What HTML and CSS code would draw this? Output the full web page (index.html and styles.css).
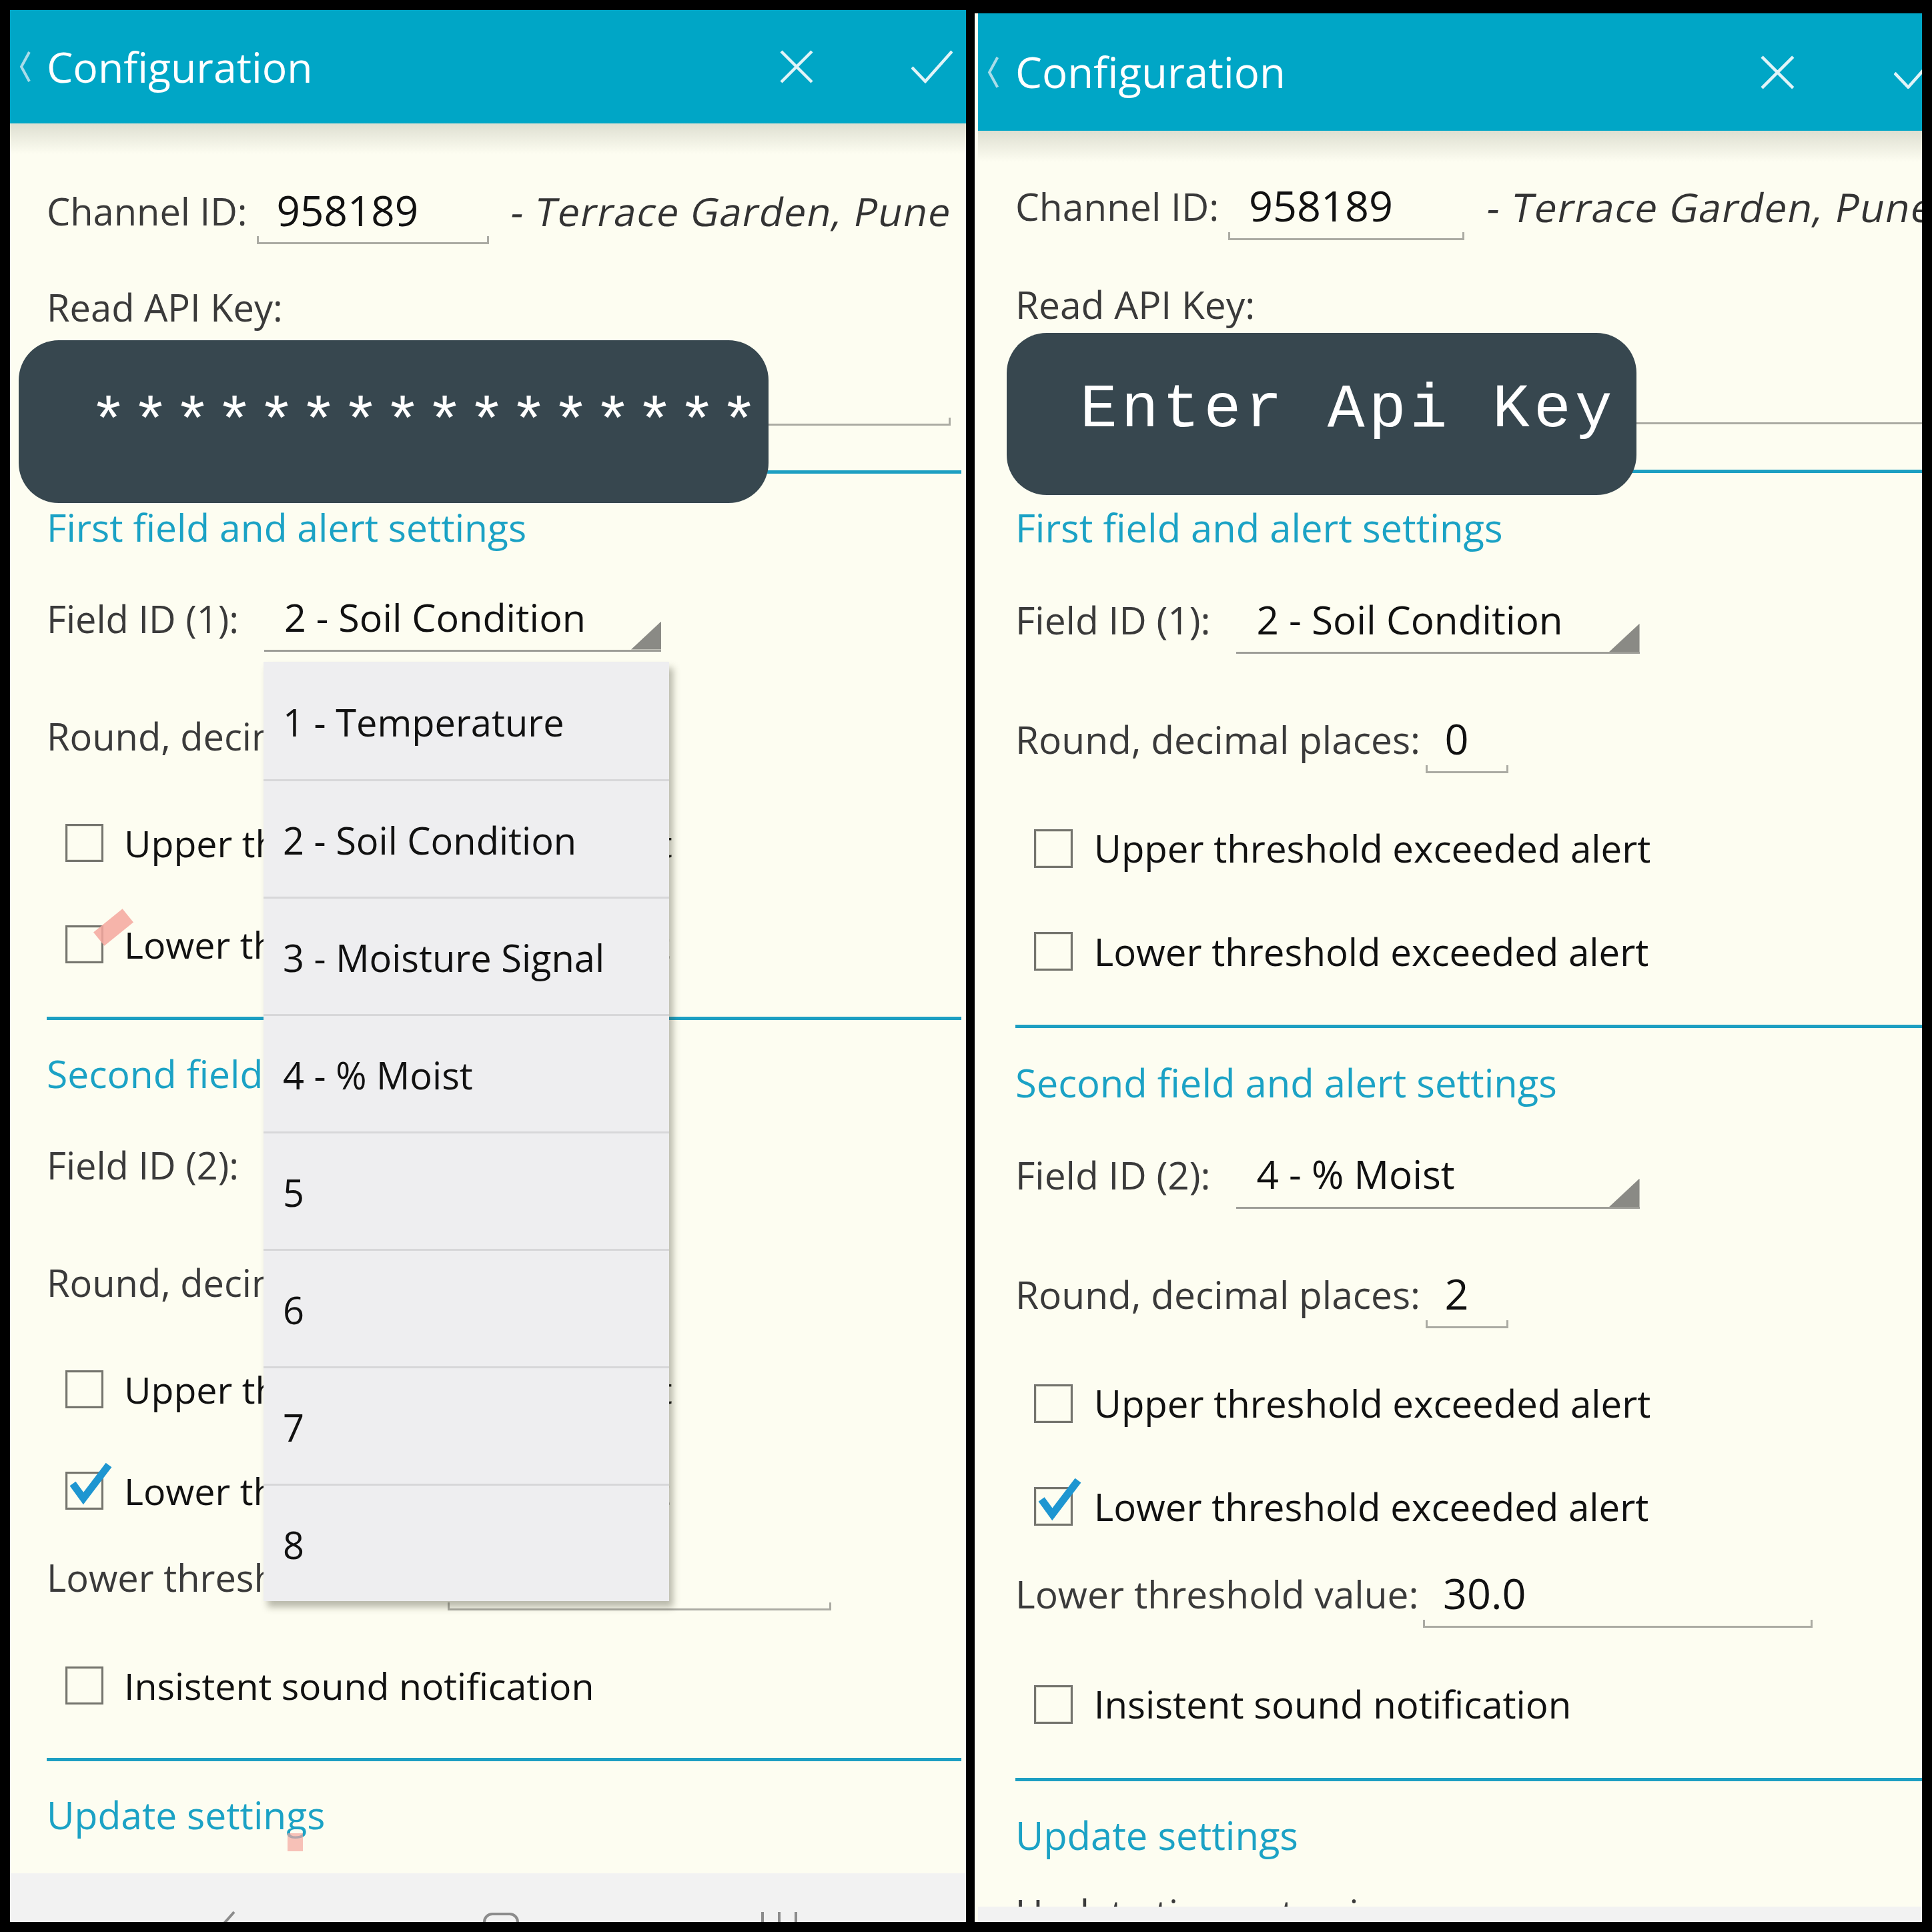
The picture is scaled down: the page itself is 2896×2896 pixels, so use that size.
FILE: index.html
```html
<!DOCTYPE html>
<html lang="en">
<head>
<meta charset="utf-8">
<title>Configuration</title>
<link rel="stylesheet" href="styles.css">
</head>
<body>
<main class="collage">

  <section class="phone phone--left">
    <div class="screen">
      <header class="appbar">
        <svg class="appbar__back" viewBox="0 0 20 50"><polyline points="16,3 4,25 16,47" fill="none" stroke="#a9dde9" stroke-width="4"/></svg>
        <h1 class="appbar__title">Configuration</h1>
        <svg class="appbar__close" viewBox="0 0 52 52"><path d="M3 3 L49 49 M49 3 L3 49" stroke="#e2f4f8" stroke-width="4.5" fill="none"/></svg>
        <svg class="appbar__done" viewBox="0 0 62 50"><polyline points="1,26 21,47 61,2" fill="none" stroke="#e2f4f8" stroke-width="4.5"/></svg>
      </header>
      <div class="content">
        <div class="row row--channel">
          <span class="label">Channel ID:</span>
          <span class="edit edit--channel"><span class="value">958189</span></span>
          <span class="channel-name">- Terrace Garden, Pune</span>
        </div>
        <div class="row row--key-label"><span class="label">Read API Key:</span></div>
        <div class="row row--key"><span class="edit edit--key"></span></div>
        <hr class="divider">
        <h2 class="section-title">First field and alert settings</h2>
        <div class="row row--field">
          <span class="label">Field ID (1):</span>
          <span class="spinner">2 - Soil Condition</span>
        </div>
        <div class="row row--round">
          <span class="label">Round, decimal places:</span>
          <span class="edit edit--round"><span class="value">0</span></span>
        </div>
        <div class="row row--check">
          <span class="checkbox"></span>
          <span class="check-label">Upper threshold exceeded alert</span>
        </div>
        <div class="row row--check">
          <span class="checkbox"></span>
          <span class="check-label">Lower threshold exceeded alert</span>
        </div>
        <hr class="divider">
        <h2 class="section-title">Second field and alert settings</h2>
        <div class="row row--field">
          <span class="label">Field ID (2):</span>
          <span class="spinner">4 - % Moist</span>
        </div>
        <div class="row row--round">
          <span class="label">Round, decimal places:</span>
          <span class="edit edit--round"><span class="value">2</span></span>
        </div>
        <div class="row row--check">
          <span class="checkbox"></span>
          <span class="check-label">Upper threshold exceeded alert</span>
        </div>
        <div class="row row--check">
          <span class="checkbox checkbox--on"><svg class="checkbox__mark" viewBox="0 0 70 66"><polyline points="6,30 22,52 60,2" fill="none" stroke="#1e96d1" stroke-width="11"/></svg></span>
          <span class="check-label">Lower threshold exceeded alert</span>
        </div>
        <div class="row row--threshold">
          <span class="label">Lower threshold value:</span>
          <span class="edit edit--threshold"><span class="value">30.0</span></span>
        </div>
        <div class="row row--check row--insistent">
          <span class="checkbox"></span>
          <span class="check-label">Insistent sound notification</span>
        </div>
        <hr class="divider">
        <h2 class="section-title">Update settings</h2>
        <div class="row row--timeout"><span class="label">Update timeout, min</span></div>
      </div>
      <nav class="navbar">
        <svg viewBox="0 0 1433 73" width="1433" height="73">
          <polyline points="336,58 320,76" fill="none" stroke="#8c8c8c" stroke-width="4"/>
          <rect x="711" y="61" width="50" height="36" rx="12" fill="none" stroke="#8c8c8c" stroke-width="4"/>
          <path d="M1128 58 V76 M1153 58 V76 M1178 58 V76" stroke="#8c8c8c" stroke-width="4"/>
        </svg>
      </nav>
    </div>

    <div class="redact redact--left">****************</div>

    <ul class="dropdown">
      <li class="dropdown__item">1 - Temperature</li>
      <li class="dropdown__item">2 - Soil Condition</li>
      <li class="dropdown__item">3 - Moisture Signal</li>
      <li class="dropdown__item">4 - % Moist</li>
      <li class="dropdown__item">5</li>
      <li class="dropdown__item">6</li>
      <li class="dropdown__item">7</li>
      <li class="dropdown__item">8</li>
    </ul>

    <span class="touch touch--check"></span>
    <span class="touch touch--update"></span>
  </section>

  <section class="phone phone--right">
    <div class="screen">
      <header class="appbar">
        <svg class="appbar__back" viewBox="0 0 20 50"><polyline points="16,3 4,25 16,47" fill="none" stroke="#a9dde9" stroke-width="4"/></svg>
        <h1 class="appbar__title">Configuration</h1>
        <svg class="appbar__close" viewBox="0 0 52 52"><path d="M3 3 L49 49 M49 3 L3 49" stroke="#e2f4f8" stroke-width="4.5" fill="none"/></svg>
        <svg class="appbar__done" viewBox="0 0 62 50"><polyline points="1,26 21,47 61,2" fill="none" stroke="#e2f4f8" stroke-width="4.5"/></svg>
      </header>
      <div class="content">
        <div class="row row--channel">
          <span class="label">Channel ID:</span>
          <span class="edit edit--channel"><span class="value">958189</span></span>
          <span class="channel-name">- Terrace Garden, Pune</span>
        </div>
        <div class="row row--key-label"><span class="label">Read API Key:</span></div>
        <div class="row row--key"><span class="edit edit--key"></span></div>
        <hr class="divider">
        <h2 class="section-title">First field and alert settings</h2>
        <div class="row row--field">
          <span class="label">Field ID (1):</span>
          <span class="spinner">2 - Soil Condition</span>
        </div>
        <div class="row row--round">
          <span class="label">Round, decimal places:</span>
          <span class="edit edit--round"><span class="value">0</span></span>
        </div>
        <div class="row row--check">
          <span class="checkbox"></span>
          <span class="check-label">Upper threshold exceeded alert</span>
        </div>
        <div class="row row--check">
          <span class="checkbox"></span>
          <span class="check-label">Lower threshold exceeded alert</span>
        </div>
        <hr class="divider">
        <h2 class="section-title">Second field and alert settings</h2>
        <div class="row row--field">
          <span class="label">Field ID (2):</span>
          <span class="spinner">4 - % Moist</span>
        </div>
        <div class="row row--round">
          <span class="label">Round, decimal places:</span>
          <span class="edit edit--round"><span class="value">2</span></span>
        </div>
        <div class="row row--check">
          <span class="checkbox"></span>
          <span class="check-label">Upper threshold exceeded alert</span>
        </div>
        <div class="row row--check">
          <span class="checkbox checkbox--on"><svg class="checkbox__mark" viewBox="0 0 70 66"><polyline points="6,30 22,52 60,2" fill="none" stroke="#1e96d1" stroke-width="11"/></svg></span>
          <span class="check-label">Lower threshold exceeded alert</span>
        </div>
        <div class="row row--threshold">
          <span class="label">Lower threshold value:</span>
          <span class="edit edit--threshold"><span class="value">30.0</span></span>
        </div>
        <div class="row row--check row--insistent">
          <span class="checkbox"></span>
          <span class="check-label">Insistent sound notification</span>
        </div>
        <hr class="divider">
        <h2 class="section-title">Update settings</h2>
        <div class="row row--timeout"><span class="label">Update timeout, min</span></div>
      </div>
      <nav class="navbar"></nav>
    </div>

    <div class="redact redact--right">Enter Api Key</div>
  </section>

</main>
</body>
</html>
```

FILE: styles.css
```css
* { box-sizing: border-box; margin: 0; padding: 0; }

html, body {
  width: 2896px;
  height: 2896px;
  background: #000;
  overflow: hidden;
}

body {
  font-family: "Open Sans", "Noto Sans", sans-serif;
}

.collage {
  display: flex;
  align-items: flex-start;
  gap: 13px;
  padding-left: 15px;
}

.phone {
  position: relative;
  overflow: hidden;
  background: #fdfdf1;
  flex: none;
}

.phone--left { margin-top: 15px; width: 1433px; height: 2866px; }
.phone--right { margin-top: 20px; width: 1420px; height: 2861px; }

.screen {
  width: 1433px;
  height: 2866px;
  display: flex;
  flex-direction: column;
  background: #fdfdf1;
  flex: none;
}

.phone--right .screen { zoom: 1.016; margin-left: 5px; }

/* ---------- app bar ---------- */
.appbar {
  flex: none;
  height: 170px;
  background: #00a6c6;
  display: flex;
  align-items: center;
  padding-right: 20px;
}
.phone--right .appbar { height: 173.2px; }

.appbar__back { width: 20px; height: 50px; margin-left: 13px; flex: none; }
.appbar__title {
  font-weight: 400;
  font-size: 62.5px;
  line-height: 1;
  color: #fff;
  margin-left: 22px;
}
.appbar__close { width: 52px; height: 52px; margin-left: auto; flex: none; }
.appbar__done { width: 62px; height: 50px; margin-left: 146px; flex: none; }

/* ---------- content ---------- */
.content {
  flex: 1;
  overflow: hidden;
  display: flex;
  flex-direction: column;
  padding: 0 7px 0 55px;
  background: linear-gradient(#dedfd1, #fdfdf1 46px);
}

.row {
  flex: none;
  height: 80px;
  display: flex;
  align-items: center;
  white-space: nowrap;
}

.label { font-size: 56px; color: #3a3a3a; }
.value { font-size: 62px; color: #111; }

.row--channel { margin-top: 91px; }
.phone--right .row--channel { margin-top: 71.6px; }
.row--key-label { margin-top: 64px; }
.row--key { margin-top: 47.5px; }
.row--field { margin-top: 57px; }
.row--round { margin-top: 96px; }
.row--check { margin-top: 72px; }
.row--round + .row--check { margin-top: 81px; }
.row--threshold { margin-top: 49px; }
.row--insistent { margin-top: 83px; }
.row--timeout { margin-top: 34px; }

.channel-name {
  display: inline-block;
  font-size: 58.5px;
  letter-spacing: 1.4px;
  color: #333;
  margin-left: 34px;
  transform: skewX(-11deg);
}

/* edit text */
.edit {
  position: relative;
  flex: none;
  height: 100px;
  display: flex;
  align-items: center;
  padding-left: 30px;
  border-bottom: 3px solid #ababa3;
  margin-left: 15px;
}
.edit::before,
.edit::after {
  content: "";
  position: absolute;
  bottom: -3px;
  width: 3px;
  height: 12px;
  background: #ababa3;
}
.edit::before { left: 0; }
.edit::after { right: 0; }

.edit--channel { width: 348px; margin-left: 14px; }
.edit--key { width: 1355px; margin-left: 0; }
.edit--round { width: 122px; margin-left: 8px; padding-left: 28px; }
.edit--threshold { width: 575px; margin-left: 6px; }

/* spinner */
.spinner {
  position: relative;
  flex: none;
  width: 595px;
  height: 100px;
  margin-left: 38px;
  padding-left: 30px;
  display: flex;
  align-items: center;
  font-size: 57.5px;
  color: #111;
  border-bottom: 3px solid #9e9e98;
}
.spinner::after {
  content: "";
  position: absolute;
  right: 0;
  bottom: 0;
  width: 45px;
  height: 42px;
  background: #8a8a85;
  clip-path: polygon(100% 0, 100% 100%, 0 100%);
}

/* section */
.section-title {
  flex: none;
  height: 80px;
  line-height: 80px;
  margin-top: 40px;
  font-weight: 400;
  font-size: 57px;
  color: #1ba2c5;
}

.divider {
  flex: none;
  border: 0;
  height: 5px;
  background: #1d9fc2;
  margin-top: 68px;
}
.row--key + .divider { margin-top: 77px; }

/* checkbox */
.checkbox {
  position: relative;
  flex: none;
  width: 57px;
  height: 57px;
  margin-left: 28px;
  border: 3px solid #75756e;
  box-shadow: inset 0 0 0 1px #e4e4d8;
}
.checkbox__mark {
  position: absolute;
  left: 2px;
  top: -15px;
  width: 70px;
  height: 66px;
  overflow: visible;
}
.check-label { font-size: 55.5px; color: #111; margin-left: 31px; }

/* nav bar */
.navbar {
  flex: none;
  height: 73px;
  background: #f2f2f2;
  overflow: hidden;
}
.navbar svg { display: block; }

/* ---------- overlays ---------- */
.redact {
  position: absolute;
  z-index: 2;
  display: flex;
  align-items: center;
  background: #37474f;
  border-radius: 60px;
  color: #fff;
  font-family: "Liberation Mono", "Courier New", monospace;
  white-space: nowrap;
}
.redact--left {
  left: 13px;
  top: 495px;
  width: 1124px;
  height: 244px;
  padding: 10px 0 0 106px;
  font-size: 95px;
  letter-spacing: 6px;
}
.redact--right {
  left: 48px;
  top: 479px;
  width: 944px;
  height: 243px;
  padding: 0 0 13px 110px;
  font-size: 93px;
  letter-spacing: 6px;
}

.dropdown {
  position: absolute;
  z-index: 3;
  left: 380px;
  top: 977px;
  width: 608px;
  list-style: none;
  background: #eeeef0;
  box-shadow: 6px 9px 10px rgba(60, 60, 40, 0.35);
}
.dropdown__item {
  height: 176px;
  display: flex;
  align-items: center;
  padding: 3px 0 0 29px;
  font-size: 56px;
  color: #111;
  border-top: 3px solid #d7d7d9;
}
.dropdown__item:first-child { border-top: 0; }

.touch {
  position: absolute;
  z-index: 4;
  background: #f4a79e;
  opacity: 0.85;
}
.touch--check {
  left: 127px;
  top: 1362px;
  width: 56px;
  height: 26px;
  transform: rotate(-39deg);
}
.touch--update {
  left: 416px;
  top: 2733px;
  width: 23px;
  height: 27px;
  opacity: 0.7;
}
```
